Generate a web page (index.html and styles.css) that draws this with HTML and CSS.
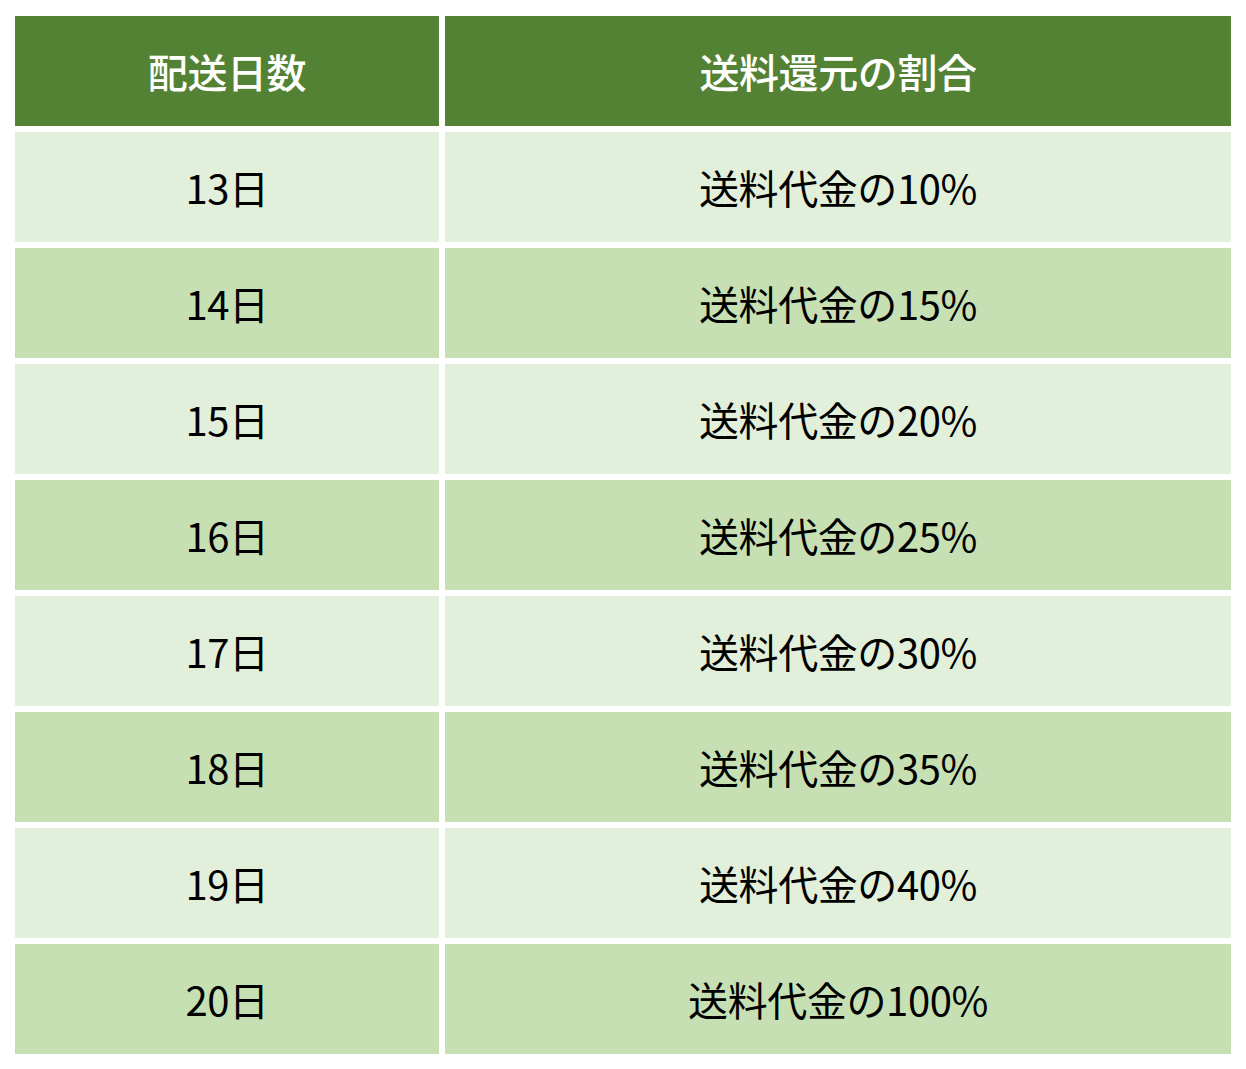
FILE: index.html
```html
<!DOCTYPE html>
<html lang="ja">
<head>
<meta charset="utf-8">
<link rel="stylesheet" href="styles.css">
</head>
<body>
<div class="table">
  <div class="cell head">配送日数</div><div class="cell head">送料還元の割合</div>
  <div class="cell light">13日</div><div class="cell light">送料代金の10%</div>
  <div class="cell dark">14日</div><div class="cell dark">送料代金の15%</div>
  <div class="cell light">15日</div><div class="cell light">送料代金の20%</div>
  <div class="cell dark">16日</div><div class="cell dark">送料代金の25%</div>
  <div class="cell light">17日</div><div class="cell light">送料代金の30%</div>
  <div class="cell dark">18日</div><div class="cell dark">送料代金の35%</div>
  <div class="cell light">19日</div><div class="cell light">送料代金の40%</div>
  <div class="cell dark">20日</div><div class="cell dark">送料代金の100%</div>
</div>
</body>
</html>
```

FILE: styles.css
```css
html, body {
  margin: 0;
  padding: 0;
  background: #ffffff;
}
body {
  padding: 16px 15px 15px 15px;
  font-family: "Noto Sans CJK JP", "Noto Sans", sans-serif;
}
.table {
  display: grid;
  grid-template-columns: 424px 786px;
  grid-auto-rows: 110px;
  gap: 6px;
}
.cell {
  display: flex;
  align-items: center;
  justify-content: center;
  font-size: 40px;
  color: #000;
  letter-spacing: -0.4px;
}
.head {
  background: #548235;
  color: #ffffff;
  font-weight: 500;
}
.light {
  background: #e2efda;
}
.dark {
  background: #c6e0b4;
}
```
